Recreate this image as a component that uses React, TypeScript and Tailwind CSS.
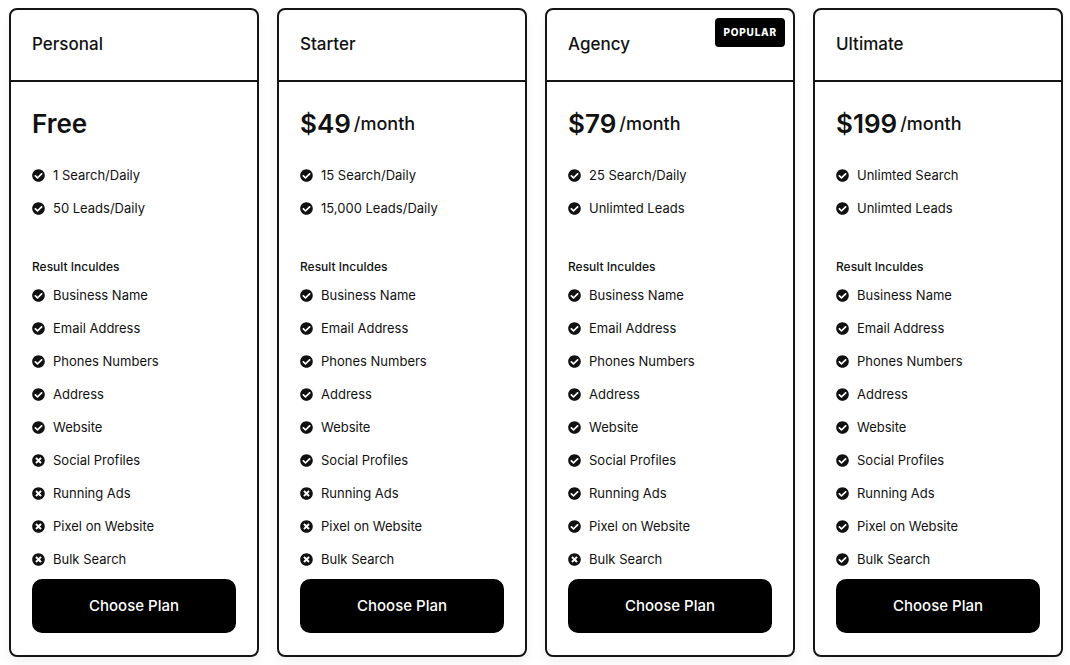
import React from "react";
import { FaCheckCircle, FaTimesCircle } from "react-icons/fa";

type Plan = {
  name: string;
  price: string;
  per?: string;
  popular?: boolean;
  top: string[];
  includes: boolean[];
};

const resultLabels = [
  "Business Name",
  "Email Address",
  "Phones Numbers",
  "Address",
  "Website",
  "Social Profiles",
  "Running Ads",
  "Pixel on Website",
  "Bulk Search",
];

const plans: Plan[] = [
  {
    name: "Personal",
    price: "Free",
    top: ["1 Search/Daily", "50 Leads/Daily"],
    includes: [true, true, true, true, true, false, false, false, false],
  },
  {
    name: "Starter",
    price: "$49",
    per: "/month",
    top: ["15 Search/Daily", "15,000 Leads/Daily"],
    includes: [true, true, true, true, true, true, false, false, false],
  },
  {
    name: "Agency",
    price: "$79",
    per: "/month",
    popular: true,
    top: ["25 Search/Daily", "Unlimted Leads"],
    includes: [true, true, true, true, true, true, true, true, false],
  },
  {
    name: "Ultimate",
    price: "$199",
    per: "/month",
    top: ["Unlimted Search", "Unlimted Leads"],
    includes: [true, true, true, true, true, true, true, true, true],
  },
];

const Row = ({ ok, label }: { ok: boolean; label: string }) => (
  <li className="flex h-[33px] items-center gap-[8px] text-[13px] text-[#111]">
    {ok ? (
      <FaCheckCircle size={13} className="shrink-0" />
    ) : (
      <FaTimesCircle size={13} className="shrink-0" />
    )}
    <span>{label}</span>
  </li>
);

const Card = ({ plan }: { plan: Plan }) => (
  <div className="relative flex w-[250px] flex-col rounded-[8px] border-2 border-[#151515] bg-white shadow-[0_6px_10px_rgba(0,0,0,0.05)]">
    <div className="flex h-[72px] items-center border-b-2 border-[#151515] px-[21px]">
      <span className="text-[17px] font-medium text-[#111]">{plan.name}</span>
    </div>
    {plan.popular && (
      <span className="absolute right-[8px] top-[8px] rounded-[4px] bg-black px-[8px] py-[7px] text-[10px] font-extrabold tracking-[0.08em] text-white">
        POPULAR
      </span>
    )}
    <div className="flex flex-col px-[21px] pb-[22px] pt-[25px]">
      <div className="flex h-[32px] items-center gap-[3px] text-[#111]">
        <span className="text-[26px] font-semibold">{plan.price}</span>
        {plan.per && <span className="text-[18px] font-medium">{plan.per}</span>}
      </div>
      <ul className="mt-[20px]">
        {plan.top.map((t) => (
          <Row key={t} ok label={t} />
        ))}
      </ul>
      <div className="mt-[34px] h-[16px] text-[12px] font-medium leading-[16px] text-[#111]">
        Result Inculdes
      </div>
      <ul className="mt-[4px]">
        {resultLabels.map((l, i) => (
          <Row key={l} ok={plan.includes[i]} label={l} />
        ))}
      </ul>
      <button className="mt-[3px] h-[54px] w-full rounded-[10px] bg-black text-[15px] font-medium text-white">
        Choose Plan
      </button>
    </div>
  </div>
);

export default function App() {
  return (
    <main
      className="min-h-screen bg-white"
      style={{ fontFamily: "Inter, 'Open Sans', sans-serif" }}
    >
      <div className="flex gap-[18px] pl-[9px] pt-[8px]">
        {plans.map((p) => (
          <Card key={p.name} plan={p} />
        ))}
      </div>
    </main>
  );
}
